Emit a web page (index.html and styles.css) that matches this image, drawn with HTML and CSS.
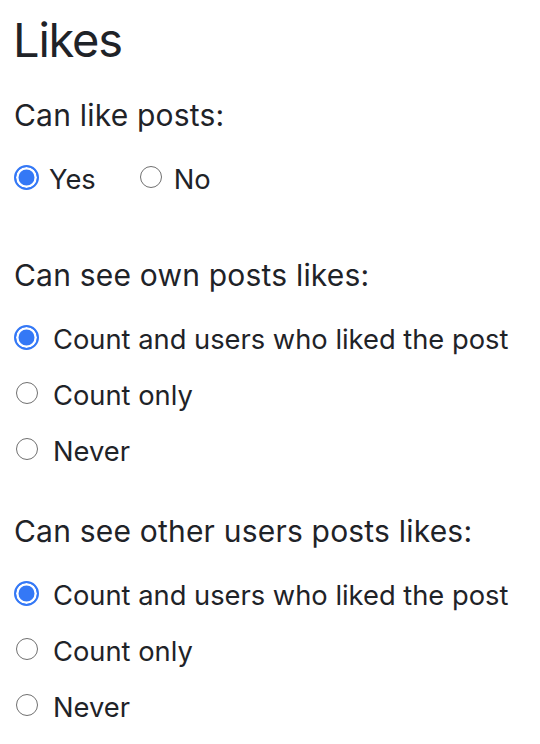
FILE: index.html
```html
<!DOCTYPE html>
<html lang="en">
<head>
<meta charset="utf-8">
<title>Likes</title>
<link rel="stylesheet" href="styles.css">
</head>
<body>
<main class="page">
  <h3 class="title">Likes</h3>

  <section class="group group-inline">
    <div class="question">Can like posts:</div>
    <div class="inline-options">
      <label class="option"><span class="radio checked"></span><span class="text">Yes</span></label>
      <label class="option"><span class="radio"></span><span class="text">No</span></label>
    </div>
  </section>

  <section class="group">
    <div class="question">Can see own posts likes:</div>
    <div class="options">
      <label class="option"><span class="radio checked"></span><span class="text">Count and users who liked the post</span></label>
      <label class="option"><span class="radio"></span><span class="text">Count only</span></label>
      <label class="option"><span class="radio"></span><span class="text">Never</span></label>
    </div>
  </section>

  <section class="group">
    <div class="question">Can see other users posts likes:</div>
    <div class="options">
      <label class="option"><span class="radio checked"></span><span class="text">Count and users who liked the post</span></label>
      <label class="option"><span class="radio"></span><span class="text">Count only</span></label>
      <label class="option"><span class="radio"></span><span class="text">Never</span></label>
    </div>
  </section>
</main>
</body>
</html>
```

FILE: styles.css
```css
html, body {
  margin: 0;
  padding: 0;
  background: #ffffff;
}

body {
  font-family: Inter, "Liberation Sans", Arial, sans-serif;
  color: #1f2328;
}

.page {
  padding: 11px 14px 0 13px;
}

.title {
  margin: 0 0 27px 0;
  font-size: 47px;
  font-weight: 400;
  line-height: 58px;
  letter-spacing: -1.2px;
}

.group {
  margin-bottom: 40px;
}

.group-inline {
  margin-bottom: 56px;
}

.question {
  font-size: 30px;
  line-height: 38px;
  letter-spacing: 0.2px;
  margin-bottom: 26px;
  padding-left: 1px;
}

.options {
  display: flex;
  flex-direction: column;
  gap: 16px;
  padding-left: 1px;
}

.inline-options {
  display: flex;
  gap: 43px;
  padding-left: 1px;
}

.option {
  display: flex;
  align-items: flex-start;
  gap: 14px;
  font-size: 27.3px;
  line-height: 40px;
}

.inline-options .option {
  gap: 10px;
}

.radio {
  flex: none;
  box-sizing: border-box;
  width: 22px;
  height: 22px;
  margin: 6px 1.5px 0 1.5px;
  border-radius: 50%;
  border: 1.8px solid #707070;
  background: #ffffff;
}

.radio.checked {
  width: 25px;
  height: 25px;
  margin: 4.5px 0 0 0;
  border: 2px solid #3478f6;
  background: #3478f6;
  box-shadow: inset 0 0 0 2.5px #ffffff;
}
```
